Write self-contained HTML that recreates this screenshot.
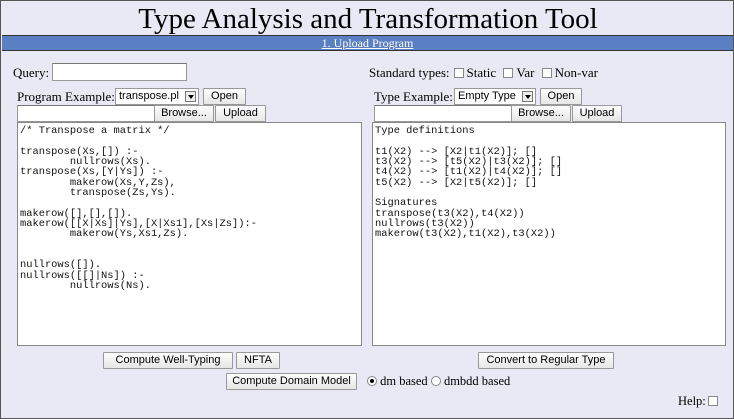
<!DOCTYPE html>
<html><head><style>
*{margin:0;padding:0;box-sizing:border-box}
body{width:734px;height:419px;background:#fff;overflow:hidden;font-family:"Liberation Serif",serif;font-size:13px;color:#000}
#f{position:absolute;left:0;top:0;width:734px;height:419px;background:#e9e9f5;border:1px solid #555;}
.a{position:absolute}
h1{position:absolute;left:0;top:2px;width:734px;text-align:center;font-weight:normal;font-size:29px;line-height:32px}
#bar{left:1px;top:34px;width:731px;height:16px;background:#5a7fc2;border-top:1px solid #333;border-bottom:1px solid #333;text-align:center;color:#fff;font-size:12px;line-height:14px}
#bar span{text-decoration:underline}
.in{background:#fff;border:1px solid #999;border-top-color:#777}
.btn{position:absolute;background:linear-gradient(#fdfdfd,#e6e6e6);border:1px solid #999;font-family:"Liberation Sans",sans-serif;font-size:11px;text-align:center;line-height:15px;height:17px;border-radius:1px;white-space:nowrap}
.sel{position:absolute;background:#fff;border:1px solid #999;font-family:"Liberation Sans",sans-serif;font-size:11px;line-height:15px;height:17px;padding-left:3px;white-space:nowrap}
.sel i{position:absolute;right:2px;top:2px;width:11px;height:11px;border:1px solid #777;background:#eee}
.sel i:after{content:"";position:absolute;left:2px;top:3px;border-left:3px solid transparent;border-right:3px solid transparent;border-top:4px solid #000}
.cb{display:inline-block;width:10px;height:10px;border:1px solid #888;background:#fff;vertical-align:-1px;margin:0 3px 0 4px}
.ta{position:absolute;background:#fff;border:1px solid #888;font-family:"Liberation Mono",monospace;font-size:10.4px;line-height:10.35px;padding:3px 0 0 2px;white-space:pre;color:#111}
</style></head><body><div id="f">
<h1>Type Analysis and Transformation Tool</h1>
<div id="bar" class="a"><span>1. Upload Program</span></div>

<div class="a" style="left:12px;top:64px">Query:</div>
<div class="a in" style="left:51px;top:62px;width:135px;height:18px"></div>
<div class="a" style="left:368px;top:64px">Standard types:<span class="cb"></span>Static <span class="cb"></span>Var <span class="cb"></span>Non-var</div>

<div class="a" style="left:16px;top:88px">Program Example:</div>
<div class="sel" style="left:114px;top:87px;width:84px">transpose.pl<i></i></div>
<div class="btn" style="left:202px;top:87px;width:43px">Open</div>
<div class="a in" style="left:16px;top:104px;width:140px;height:17px"></div>
<div class="btn" style="left:153px;top:104px;width:60px">Browse...</div>
<div class="btn" style="left:214px;top:104px;width:51px">Upload</div>

<div class="a" style="left:373px;top:88px">Type Example:</div>
<div class="sel" style="left:453px;top:87px;width:82px">Empty Type<i></i></div>
<div class="btn" style="left:539px;top:87px;width:42px">Open</div>
<div class="a in" style="left:373px;top:104px;width:140px;height:17px"></div>
<div class="btn" style="left:510px;top:104px;width:60px">Browse...</div>
<div class="btn" style="left:571px;top:104px;width:50px">Upload</div>

<div class="ta" style="left:16px;top:121px;width:345px;height:224px">/* Transpose a matrix */

transpose(Xs,[]) :-
        nullrows(Xs).
transpose(Xs,[Y|Ys]) :-
        makerow(Xs,Y,Zs),
        transpose(Zs,Ys).

makerow([],[],[]).
makerow([[X|Xs]|Ys],[X|Xs1],[Xs|Zs]):-
        makerow(Ys,Xs1,Zs).


nullrows([]).
nullrows([[]|Ns]) :-
        nullrows(Ns).</div>
<div class="ta" style="left:371px;top:121px;width:354px;height:224px">Type definitions

t1(X2) --> [X2|t1(X2)]; []
t3(X2) --> [t5(X2)|t3(X2)]; []
t4(X2) --> [t1(X2)|t4(X2)]; []
t5(X2) --> [X2|t5(X2)]; []

Signatures
transpose(t3(X2),t4(X2))
nullrows(t3(X2))
makerow(t3(X2),t1(X2),t3(X2))</div>

<div class="btn" style="left:102px;top:351px;width:130px">Compute Well-Typing</div>
<div class="btn" style="left:235px;top:351px;width:44px">NFTA</div>
<div class="btn" style="left:477px;top:351px;width:136px">Convert to Regular Type</div>
<div class="btn" style="left:225px;top:372px;width:131px">Compute Domain Model</div>
<div class="a" style="left:366px;top:373px;font-size:12.5px"><span style="display:inline-block;width:10px;height:10px;border-radius:50%;border:1px solid #888;background:#fff;vertical-align:-1px;position:relative"><span style="position:absolute;left:2px;top:2px;width:4px;height:4px;border-radius:50%;background:#000"></span></span> dm based <span style="display:inline-block;width:10px;height:10px;border-radius:50%;border:1px solid #888;background:#fff;vertical-align:-1px"></span> dmbdd based</div>
<div class="a" style="left:677px;top:393px;font-size:12.5px">Help:<span class="cb" style="margin-left:2px"></span></div>
</div></body></html>
